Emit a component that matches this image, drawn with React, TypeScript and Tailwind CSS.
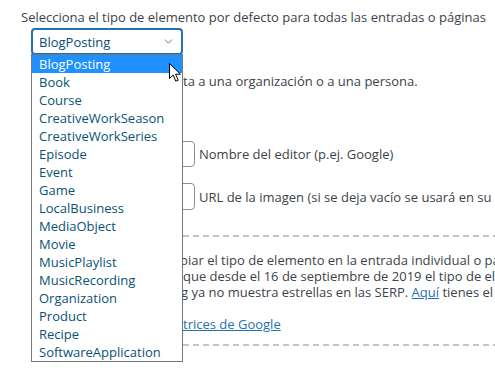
import { ChevronDown } from "lucide-react";

const TYPES = [
  "BlogPosting",
  "Book",
  "Course",
  "CreativeWorkSeason",
  "CreativeWorkSeries",
  "Episode",
  "Event",
  "Game",
  "LocalBusiness",
  "MediaObject",
  "Movie",
  "MusicPlaylist",
  "MusicRecording",
  "Organization",
  "Product",
  "Recipe",
  "SoftwareApplication",
];

function Cursor() {
  return (
    <svg width="14" height="20" viewBox="0 0 14 20" className="absolute left-[137px] top-[8px]">
      <path
        d="M0.5 0.5 V15.5 L4.2 12 L6.8 18.2 L9.2 17.2 L6.6 11.2 H11.5 Z"
        fill="#fff"
        stroke="#000"
        strokeWidth="1"
        strokeLinejoin="round"
      />
    </svg>
  );
}

function Dashed() {
  return (
    <div className="ml-[183px] h-[2px] bg-[repeating-linear-gradient(90deg,#c3c4c7_0_6px,transparent_6px_10px)]" />
  );
}

export default function App() {
  return (
    <main className="relative h-[374px] w-[495px] overflow-hidden bg-white font-['Open_Sans',sans-serif] text-[13px] leading-[18px] text-[#3c434a]">
      {/* ajustes de tipo de elemento */}
      <p className="ml-[21px] mt-[8px] whitespace-nowrap">
        Selecciona el tipo de elemento por defecto para todas las entradas o páginas
      </p>

      <div className="ml-[31px] mt-[2px] flex h-[27px] w-[152px] items-center justify-between rounded-[4px] border-2 border-[#2271b1] pl-[6px] pr-[6px] text-[#0a4b78]">
        <span>BlogPosting</span>
        <ChevronDown size={13} strokeWidth={1.75} className="text-[#646970]" />
      </div>

      <p className="ml-[183px] mt-[17px] whitespace-nowrap">ta a una organización o a una persona.</p>

      <div className="mt-[51px] flex items-center whitespace-nowrap">
        <div className="ml-[150px] h-[26px] w-[45px] shrink-0 rounded-[4px] border border-[#8c8f94]" />
        <span className="ml-[4px]">Nombre del editor (p.ej. Google)</span>
      </div>
      <div className="mt-[16px] flex items-center whitespace-nowrap">
        <div className="ml-[150px] h-[27px] w-[45px] shrink-0 rounded-[4px] border border-[#8c8f94]" />
        <span className="ml-[4px]">URL de la imagen (si se deja vacío se usará en su logo)</span>
      </div>

      <div className="mt-[25px]">
        <Dashed />
      </div>

      <div className="mt-[15px] whitespace-nowrap leading-[16px]">
        <p className="ml-[180px]">biar el tipo de elemento en la entrada individual o página</p>
        <p className="ml-[183px]">que desde el 16 de septiembre de 2019 el tipo de elemento</p>
        <p className="ml-[181px]">
          g ya no muestra estrellas en las SERP.{" "}
          <a className="text-[#2271b1] underline">Aquí</a> tienes el artículo
        </p>
        <p className="ml-[183px] mt-[16px]">
          <a className="text-[#2271b1] underline">trices de Google</a>
        </p>
      </div>

      <div className="mt-[12px]">
        <Dashed />
      </div>

      {/* lista desplegada del select */}
      <ul className="absolute left-[31px] top-[54px] w-[152px] border border-[#767676] bg-white text-[#0a5275]">
        {TYPES.map((t, i) => (
          <li
            key={t}
            className={
              i === 0
                ? "relative h-[18px] bg-[#1e90ff] pl-[7px] leading-[18px] text-white"
                : "h-[18px] pl-[7px] leading-[18px]"
            }
          >
            {t}
            {i === 0 && <Cursor />}
          </li>
        ))}
      </ul>
    </main>
  );
}
